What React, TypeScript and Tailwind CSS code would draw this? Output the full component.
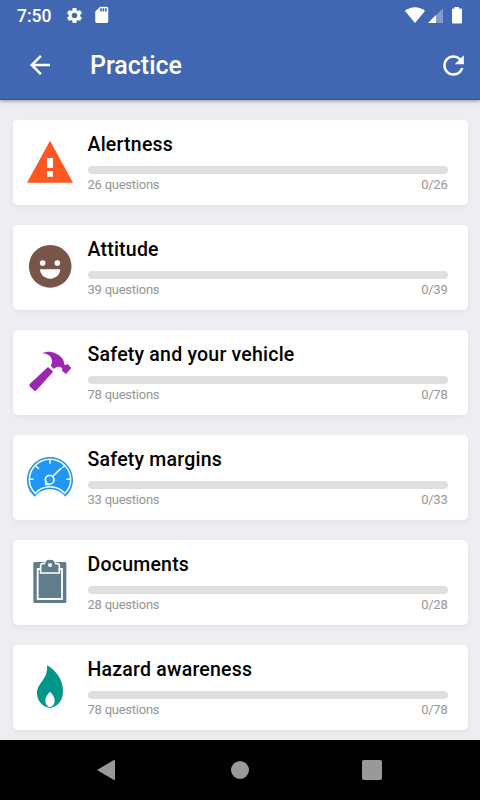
import type { ReactNode } from "react";
import { MdArrowBack, MdRefresh, MdSdCard, MdSettings } from "react-icons/md";

type Topic = {
  title: string;
  total: number;
  icon: ReactNode;
};

const AlertIcon = () => (
  <svg viewBox="75 81 150 150" className="size-[50px]">
    <path
      fill="#ff5722"
      fillRule="evenodd"
      d="M150 92 219 218H81ZM141 144V174H159V144ZM141 183V200H159V183Z"
    />
  </svg>
);

const SmileIcon = () => (
  <svg viewBox="30 36 150 150" className="size-[50px]">
    <circle cx="105.500" cy="109" r="64" fill="#795548" />
    <circle cx="83" cy="99" r="8.500" fill="#fff" />
    <circle cx="127" cy="99" r="8.500" fill="#fff" />
    <path fill="#fff" d="M75 118H136C135 134 123 146 105.500 146S76 134 75 118Z" />
  </svg>
);

const HammerIcon = () => (
  <svg viewBox="30 36 150 150" className="size-[50px]" fill="#9c27b0">
    <path d="M82 55C94 49 109 49 121 55C137 62 148 74 147 87L151 91L158 87L169 99L153 117L141 107L142 101L136 96C127 93 121 97 117 102L107 92C114 83 112 72 105 64C99 58 91 56 82 55Z" />
    <path d="M99 96 113 108Q114 111 111 114L64 166Q60 170 56 166L44 154Q41 150 45 146Z" />
  </svg>
);

const GaugeIcon = () => (
  <svg viewBox="30 21 150 150" className="size-[50px]" fill="none">
    <path
      fill="#2196f3"
      d="M60 155C44 143 36 125 36 105C36 67 67 36 105 36S174 67 174 105C174 125 166 143 150 155C139 140 122 133 105 133S71 140 60 155Z"
    />
    <path
      stroke="#fff"
      strokeWidth="4.500"
      d="M61 145C49 134 43 120 43 105C43 70 71 43 105 43S167 70 167 105C167 120 161 134 149 145C138 132 122 125 105 125S72 132 61 145Z"
    />
    <path stroke="#fff" strokeWidth="4.500" d="M105 43V56M62 62 72 72M43 103H56M154 103H167M148 62 142 68" />
    <path stroke="#fff" strokeWidth="5" d="M113 94 139 69" />
    <circle cx="104" cy="104" r="13" stroke="#fff" strokeWidth="5" />
    <path stroke="#fff" strokeWidth="4" d="M92 107V119H104" />
  </svg>
);

const ClipboardIcon = () => (
  <svg viewBox="30 21 150 150" className="size-[50px]" fill="none">
    <rect x="55" y="36" width="99" height="123" rx="4" fill="#607d8b" />
    <path stroke="#fff" strokeWidth="5.500" d="M76 57H68V147H141V57H133" />
    <path
      fill="#607d8b"
      stroke="#fff"
      strokeWidth="5"
      d="M77 69V46Q77 41 83 41H87C91 41 91 36 92 34C94 26 117 26 118 34C119 36 119 41 123 41H127Q133 41 133 46V69Z"
    />
    <path fill="#607d8b" d="M92 36C94 27 116 27 118 36L120 42H90Z" />
    <circle cx="105" cy="45" r="6" fill="#fff" />
  </svg>
);

const FlameIcon = () => (
  <svg viewBox="30 21 150 150" className="size-[50px]">
    <path
      fill="#009688"
      d="M96 31C119 43 144 71 144 108C144 136 129 155 105 159C81 155 66 137 66 114C66 84 100 74 96 31Z"
    />
    <path fill="#fff" d="M105 110C113 118 119 127 119 137C119 147 113 155 105 156C97 155 91 147 91 137C91 127 97 118 105 110Z" />
  </svg>
);

const topics: Topic[] = [
  { title: "Alertness", total: 26, icon: <AlertIcon /> },
  { title: "Attitude", total: 39, icon: <SmileIcon /> },
  { title: "Safety and your vehicle", total: 78, icon: <HammerIcon /> },
  { title: "Safety margins", total: 33, icon: <GaugeIcon /> },
  { title: "Documents", total: 28, icon: <ClipboardIcon /> },
  { title: "Hazard awareness", total: 78, icon: <FlameIcon /> },
];

function StatusBar() {
  return (
    <div className="flex h-[30px] items-center pl-[17px] pr-[18px]">
      <span className="w-[48px] pt-[2px] text-[17.500px] leading-[30px] font-medium">7:50</span>
      <MdSettings className="size-[19px]" />
      <MdSdCard className="ml-2 size-[19.500px]" />
      {/* Wifi, signal, battery */}
      <svg viewBox="0 0 57 17" className="ml-auto h-[17px] w-[57px]" fill="#fff">
        <path d="M0 3.900C5.500-.9 14.500-.9 20 3.900L10 16Z" />
        <path fillOpacity=".35" d="M38 1.500V16H23Z" />
        <path d="M31 8V16H23Z" />
        <path d="M49.500 0H54V1.500H56Q57 1.500 57 2.500V15.500Q57 16.500 56 16.500H48Q47 16.500 47 15.500V2.500Q47 1.500 48 1.500H49.500Z" />
      </svg>
    </div>
  );
}

function TopicCard({ title, total, icon }: Topic) {
  return (
    <div className="flex h-[85px] shrink-0 rounded-[5px] bg-white pl-[12.500px] pr-5 shadow-[0_2px_5px_rgba(0,0,0,0.05)]">
      <div className="mt-[17px] w-[62.500px] shrink-0">{icon}</div>
      <div className="flex-1 pt-3">
        <h2 className="text-[19.500px] leading-[26px] font-medium tracking-[0.22px] text-black">{title}</h2>
        <div className="mt-2 h-[7.500px] rounded-full bg-[#dfdfdf]" />
        <div className="mt-[3px] flex justify-between text-[13px] leading-4 tracking-[-0.24px] text-[#969696]">
          <span>{total} questions</span>
          <span>0/{total}</span>
        </div>
      </div>
    </div>
  );
}

export default function App() {
  return (
    <div className="flex h-[800px] w-[480px] flex-col overflow-hidden bg-[#eeedf2] font-['Roboto',sans-serif]">
      {/* Header */}
      <header className="z-10 h-[100px] shrink-0 border-b border-[#2459a8] bg-[#4167b2] text-white shadow-[0_1px_4px_rgba(0,0,0,0.4)]">
        <StatusBar />
        <div className="flex h-[70px] items-center pr-[11px] pl-[25px]">
          <MdArrowBack className="size-[30px]" />
          <h1 className="ml-[35px] pt-[2px] text-[25px] leading-[30px] font-medium">Practice</h1>
          <MdRefresh className="ml-auto size-[31px]" />
        </div>
      </header>

      {/* Topics */}
      <main className="flex flex-1 flex-col gap-5 overflow-hidden px-[12.500px] pt-5">
        {topics.map((topic) => (
          <TopicCard key={topic.title} {...topic} />
        ))}
      </main>

      {/* System navigation */}
      <nav className="flex h-[60px] shrink-0 items-center bg-black pl-[97px]">
        <svg viewBox="0 0 18 20" className="h-5 w-[18px]" fill="#999">
          <path d="M0 10 16.500 .3Q18-.3 18 1V19Q18 20.300 16.500 19.700Z" />
        </svg>
        <div className="ml-[116px] size-[18px] rounded-full bg-[#999]" />
        <div className="ml-[113px] size-5 rounded-[2px] bg-[#999]" />
      </nav>
    </div>
  );
}
